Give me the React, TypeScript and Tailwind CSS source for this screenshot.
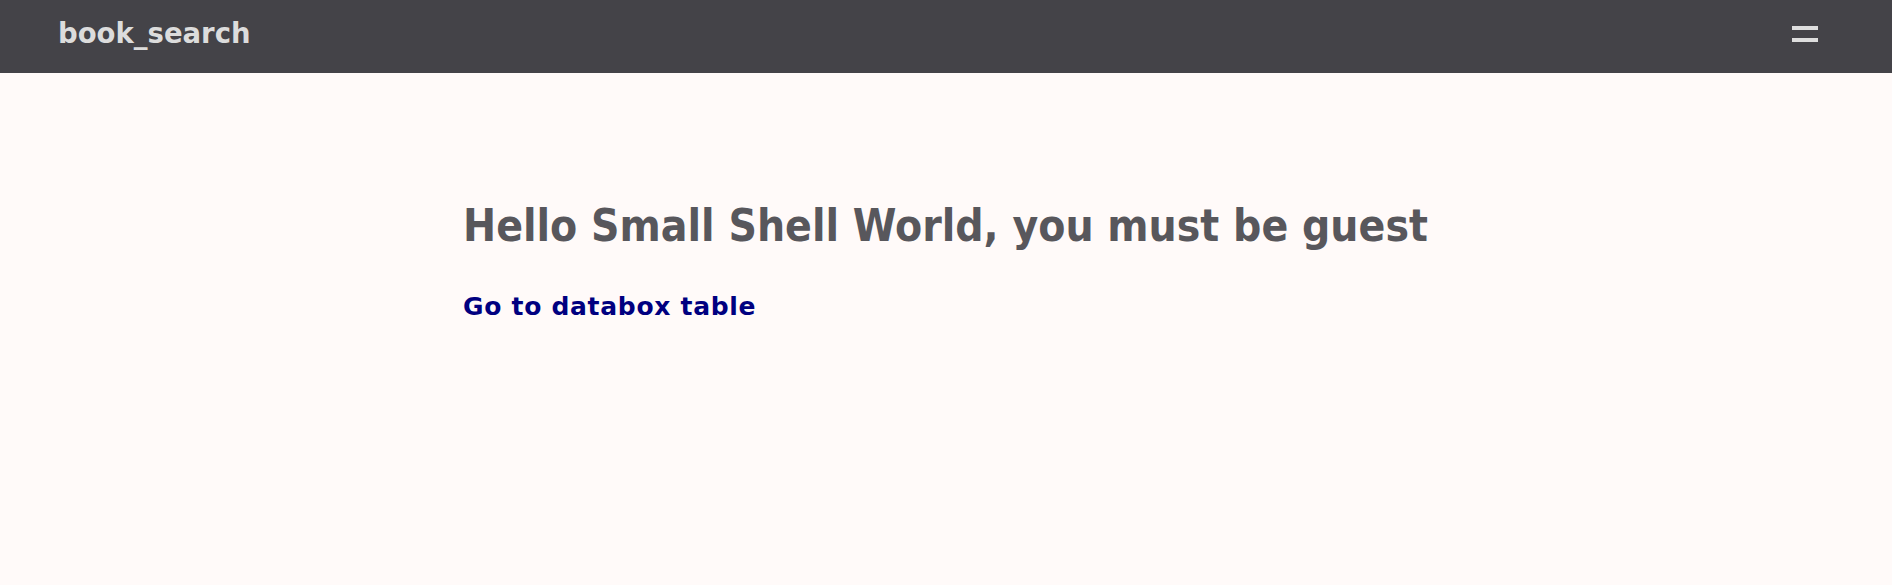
import React from "react";

export default function App() {
  return (
    <div className="min-h-[585px] bg-[#fffaf9] font-['DejaVu_Sans',sans-serif]">
      <header className="flex h-[73px] items-start justify-between bg-[#444348] pl-[58px] pr-[74px]">
        <a href="#" className="mt-[20px] text-[27.5px] leading-[27px] font-bold text-[#dcdcdc]">
          book_search
        </a>
        <button aria-label="menu" className="mt-[26px] flex flex-col gap-[8px]">
          <span className="block h-[4px] w-[26px] bg-[#dedede]" />
          <span className="block h-[4px] w-[26px] bg-[#dedede]" />
        </button>
      </header>
      <main className="ml-[463px] pt-[131px]">
        <h1 className="font-['DejaVu_Sans_Condensed','DejaVu_Sans',sans-serif] text-[44px] leading-[44px] font-bold text-[#58575c]">
          Hello Small Shell World, you must be guest
        </h1>
        <a href="#" className="mt-[46px] block text-[25px] leading-[25px] font-bold tracking-[0.7px] text-[#000080]">
          Go to databox table
        </a>
      </main>
    </div>
  );
}
